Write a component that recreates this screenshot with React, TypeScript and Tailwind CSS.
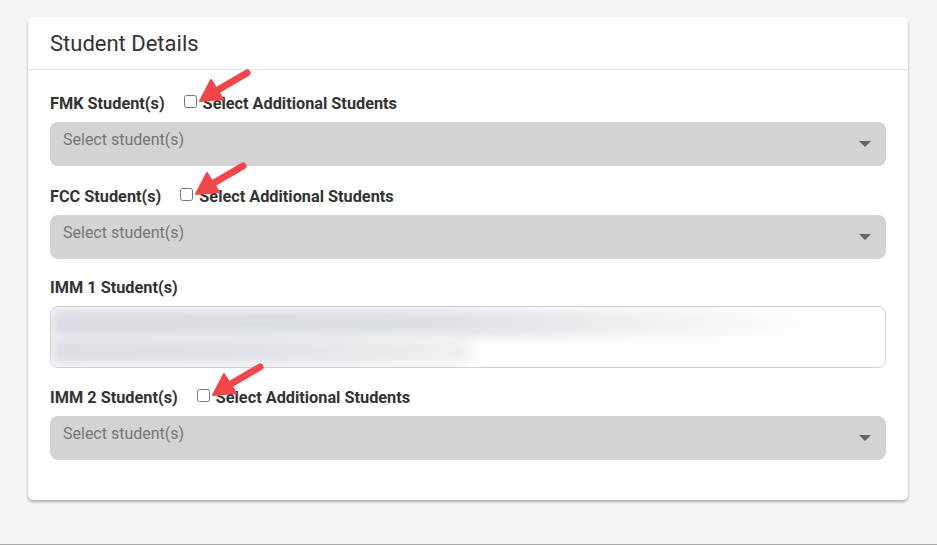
import React from "react";

const font = { fontFamily: "Roboto, 'Liberation Sans', sans-serif" };

function Arrow() {
  // red annotation arrow pointing down-left at the checkbox
  return (
    <svg
      className="absolute left-[14px] top-[-31px] pointer-events-none"
      width="54"
      height="34"
      viewBox="0 0 54 34"
    >
      <line x1="49" y1="4" x2="18" y2="22" stroke="#f2474a" strokeWidth="7" strokeLinecap="round" />
      <polygon points="2,32 25,30 13,11" fill="#f2474a" stroke="#f2474a" strokeWidth="2" strokeLinejoin="round" />
    </svg>
  );
}

function FieldLabel({ text, additional }: { text: string; additional?: boolean }) {
  return (
    <div className="relative top-px flex items-center h-5 text-[16.3px] font-bold text-[#333]">
      <span>{text}</span>
      {additional && (
        <label className="flex items-center ml-[19px]">
          <span className="relative flex">
            <input type="checkbox" className="w-[13px] h-[13px] m-0 -mt-[5px]" />
            <Arrow />
          </span>
          <span className="ml-[6px]">Select Additional Students</span>
        </label>
      )}
    </div>
  );
}

function StudentSelect() {
  return (
    <div className="mt-[9px] h-[44px] rounded-lg bg-[#d3d3d3] flex justify-between pl-[13px] pr-[15px]">
      <span className="pt-2 text-[16px] leading-5 text-[#777]">Select student(s)</span>
      <span className="self-center w-0 h-0 border-l-[6px] border-r-[6px] border-t-[6px] border-l-transparent border-r-transparent border-t-[#666]" />
    </div>
  );
}

export default function App() {
  return (
    <div style={font} className="h-[545px] bg-[#f4f4f4] border-b border-[#a8a8a8] pt-[17px] px-[28px] pr-[29px]">
      <div className="bg-white rounded-[5px] shadow-[0_2px_3px_rgba(0,0,0,0.3)] h-[483px]">
        <div className="h-[53px] flex items-center px-[22px] pt-px border-b border-[#e0e0e0]">
          <h2 className="text-[22px] text-[#333] leading-7">Student Details</h2>
        </div>
        <div className="px-[22px] pt-[23px]">
          <FieldLabel text="FMK Student(s)" additional />
          <StudentSelect />

          <div className="mt-[20px]">
            <FieldLabel text="FCC Student(s)" additional />
            <StudentSelect />
          </div>

          <div className="mt-[18px]">
            <FieldLabel text="IMM 1 Student(s)" />
            <div className="mt-[9px] h-[62px] rounded-lg border border-[#cfcfcf] bg-white overflow-hidden flex flex-col pt-[2px]">
              <div className="h-[28px] w-[780px] bg-gradient-to-r from-[#d8dce2] via-[#dce0e5] to-transparent blur-[6px]" />
              <div className="h-[28px] w-[420px] bg-gradient-to-r from-[#dbdfe4] via-[#dfe2e7] to-[#eef0f2] blur-[6px]" />
            </div>
          </div>

          <div className="mt-[19px]">
            <FieldLabel text="IMM 2 Student(s)" additional />
            <StudentSelect />
          </div>
        </div>
      </div>
    </div>
  );
}
